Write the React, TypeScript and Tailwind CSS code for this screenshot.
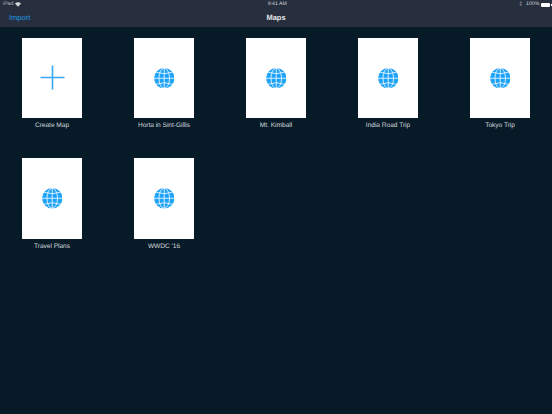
const font = { fontFamily: '"Liberation Sans", Arial, sans-serif' };

function Globe() {
  return (
    <svg width="20.5" height="20.5" viewBox="0 0 21 21" fill="none" className="mr-[0.5px]">
      <circle cx="10.5" cy="10.5" r="10.4" fill="#1fa3f7" />
      <g stroke="#ffffff" strokeWidth="0.8">
        <line x1="10.5" y1="0" x2="10.5" y2="21" />
        <line x1="0" y1="10.5" x2="21" y2="10.5" />
        <ellipse cx="10.5" cy="10.5" rx="5.4" ry="10.3" />
        <path d="M2.2 4.4 Q10.5 7.4 18.8 4.4" />
        <path d="M2.2 16.6 Q10.5 13.6 18.8 16.6" />
      </g>
    </svg>
  );
}

function Plus() {
  return (
    <svg width="25" height="25" viewBox="0 0 25 25" fill="none">
      <path d="M12.5 0.5V24.5M0.5 12.5H24.5" stroke="#38a8f2" strokeWidth="1.6" />
    </svg>
  );
}

function Tile({ label, plus }: { label: string; plus?: boolean }) {
  return (
    <div className="flex w-[112px] flex-col items-center">
      <div className="flex h-[80.5px] w-[60.5px] items-center justify-center bg-white">
        {plus ? <Plus /> : <Globe />}
      </div>
      <div className="mt-[2px] h-[12px] whitespace-nowrap text-[6.6px] leading-[12px] tracking-[-0.03px] text-[#d4d8db]">{label}</div>
    </div>
  );
}

export default function App() {
  const maps = ["Horta in Sint-Gillis", "Mt. Kimball", "India Road Trip", "Tokyo Trip", "Travel Plans", "WWDC '16"];
  return (
    <div className="flex h-[414px] w-[552px] flex-col overflow-hidden bg-[#071a28] [text-rendering:geometricPrecision]" style={font}>
      <header className="flex h-[26.5px] shrink-0 flex-col bg-[#272f3e]">
        <div className="flex h-[9px] items-center justify-between pl-[3px] pr-[0.5px] pt-[1px] text-[5.2px] text-[#b5bac2]">
          <div className="flex w-[100px] items-center gap-[2px]">
            <span>iPad</span>
            <svg width="6" height="5" viewBox="0 0 12 9" fill="#d5d8dd"><path d="M6 9 0 2.6C3.4-.8 8.6-.8 12 2.6Z" /></svg>
          </div>
          <span className="text-[#cfd2d7]">9:41 AM</span>
          <div className="flex w-[100px] items-center justify-end gap-[1px]">
            <span className="mr-[3px] text-[#8d93a0]">⁑</span>
            <span className="mr-[0.5px] text-[#cfd2d7]">100%</span>
            <span className="h-[4px] w-[9px] rounded-[1px] bg-white" />
            <span className="h-[2px] w-[0.7px] bg-white" />
          </div>
        </div>
        <div className="relative flex h-[17px] items-center justify-center">
          <span className="absolute left-[9px] top-[3px] text-[7.5px] leading-[11px] text-[#2196e6]">Import</span>
          <span className="text-[7.5px] font-bold leading-[11px] text-[#e4e6e9]">Maps</span>
        </div>
      </header>
      <main className="ml-[-4px] grid grid-cols-[repeat(5,112px)] gap-y-[26px] pt-[11px]">
        <Tile label="Create Map" plus />
        {maps.map((m) => (
          <Tile key={m} label={m} />
        ))}
      </main>
    </div>
  );
}
